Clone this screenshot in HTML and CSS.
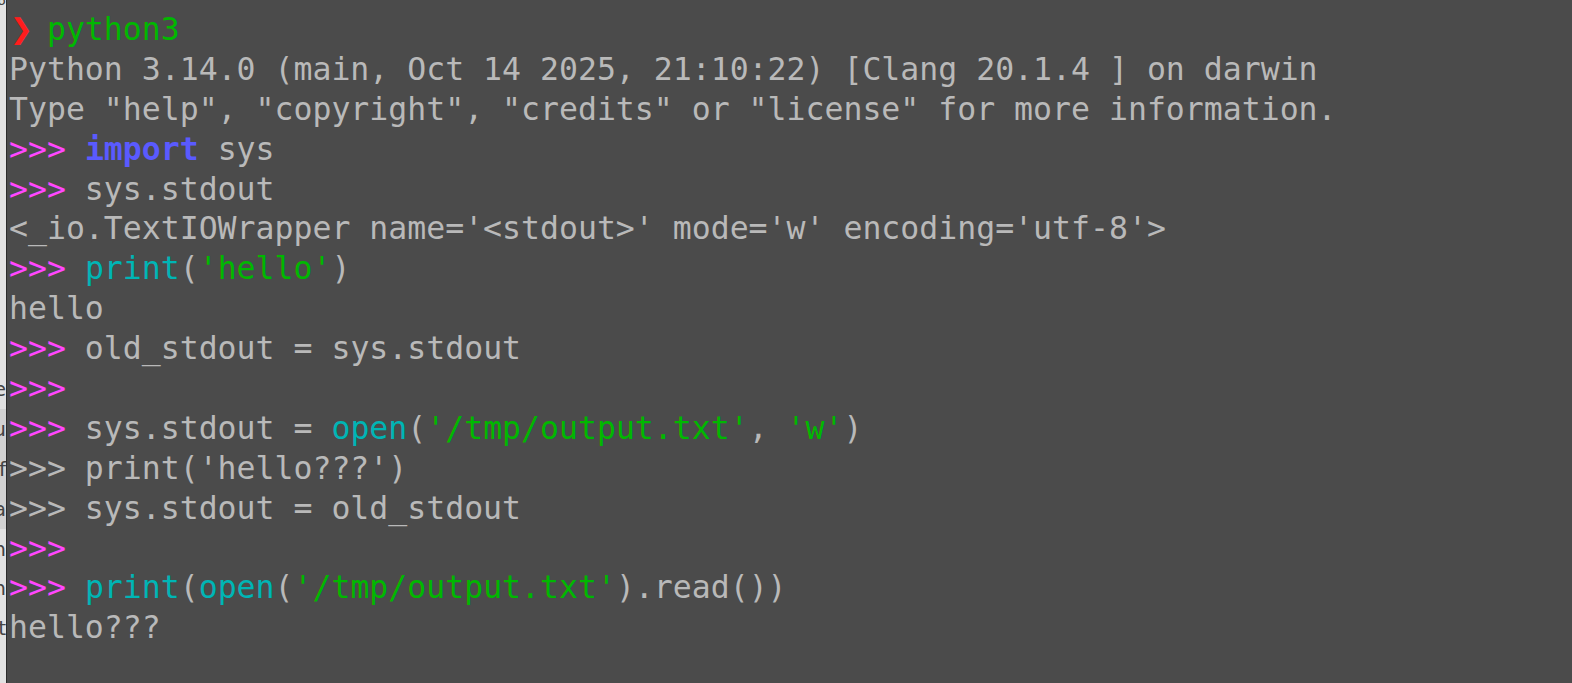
FILE: index.html
```html
<!DOCTYPE html>
<html>
<head>
<meta charset="utf-8">
<link rel="stylesheet" href="styles.css">
</head>
<body>
<div class="window">
  <div class="behind">
    <div class="bl first"><span>6</span></div>
    <div class="bl"></div>
    <div class="bl"></div>
    <div class="bl"></div>
    <div class="bl"></div>
    <div class="bl"></div>
    <div class="bl"></div>
    <div class="bl"></div>
    <div class="bl"></div>
    <div class="bl"><span>line</span></div>
    <div class="bl hl"><span>you</span></div>
    <div class="bl hl"><span>if</span></div>
    <div class="bl hl"><span>via</span></div>
    <div class="bl"><span>then</span></div>
    <div class="bl"><span>when</span></div>
    <div class="bl"><span>it</span></div>
    <div class="bl"></div>
  </div>
  <div class="term">
    <div class="ln"><span class="chev">❯</span> <span class="grn">python3</span></div>
    <div class="ln">Python 3.14.0 (main, Oct 14 2025, 21:10:22) [Clang 20.1.4 ] on darwin</div>
    <div class="ln">Type "help", "copyright", "credits" or "license" for more information.</div>
    <div class="ln"><span class="pr">&gt;&gt;&gt;</span> <span class="kw">import</span> sys</div>
    <div class="ln"><span class="pr">&gt;&gt;&gt;</span> sys.stdout</div>
    <div class="ln">&lt;_io.TextIOWrapper name='&lt;stdout&gt;' mode='w' encoding='utf-8'&gt;</div>
    <div class="ln"><span class="pr">&gt;&gt;&gt;</span> <span class="cy">print</span>(<span class="grn">'hello'</span>)</div>
    <div class="ln">hello</div>
    <div class="ln"><span class="pr">&gt;&gt;&gt;</span> old_stdout = sys.stdout</div>
    <div class="ln"><span class="pr">&gt;&gt;&gt;</span></div>
    <div class="ln"><span class="pr">&gt;&gt;&gt;</span> sys.stdout = <span class="cy">open</span>(<span class="grn">'/tmp/output.txt'</span>, <span class="grn">'w'</span>)</div>
    <div class="ln">&gt;&gt;&gt; print('hello???')</div>
    <div class="ln">&gt;&gt;&gt; sys.stdout = old_stdout</div>
    <div class="ln"><span class="pr">&gt;&gt;&gt;</span></div>
    <div class="ln"><span class="pr">&gt;&gt;&gt;</span> <span class="cy">print</span>(<span class="cy">open</span>(<span class="grn">'/tmp/output.txt'</span>).read())</div>
    <div class="ln">hello???</div>
  </div>
</div>
</body>
</html>
```
FILE: styles.css
```css
html, body {
  margin: 0;
  padding: 0;
  height: 100%;
  overflow: hidden;
}
.window {
  display: flex;
  height: 683px;
  width: 1572px;
}
.behind {
  width: 6px;
  flex: none;
  background: #e2e2e2;
  overflow: hidden;
  padding-top: 10px;
  box-sizing: border-box;
  font-family: "DejaVu Sans", sans-serif;
  font-size: 20px;
  color: #444;
}
.bl {
  height: 39.9px;
  display: flex;
  justify-content: flex-end;
  align-items: center;
  white-space: nowrap;
  margin-left: -40px;
}
.bl.first {
  height: 20px;
  margin-top: -20px;
  font-size: 14px;
  margin-bottom: 39.9px;
}
.bl.hl {
  background: #d2d2d2;
}
.term {
  flex: 1;
  background: #4b4b4b;
  border-left: 1px solid #2b2b2b;
  padding: 10px 0 0 2px;
  font-family: "DejaVu Sans Mono", monospace;
  font-size: 31.5px;
  color: #b9b9b9;
}
.ln {
  height: 39.9px;
  line-height: 39.9px;
  white-space: pre;
}
.chev {
  display: inline-block;
  width: 18.97px;
  font-size: 38px;
  font-weight: bold;
  color: #ff1d1d;
  line-height: 39.9px;
  vertical-align: top;
  text-indent: 1px;
}
.grn { color: #00b800; }
.pr { color: #ff47ff; }
.kw { color: #5a5aff; font-weight: bold; }
.cy { color: #00b5b5; }
```
